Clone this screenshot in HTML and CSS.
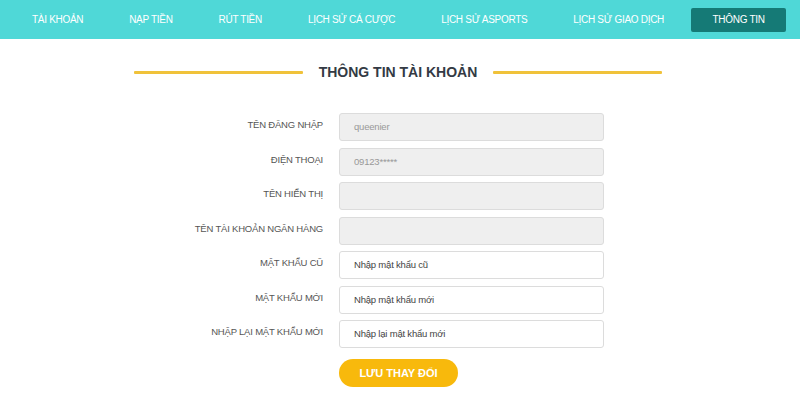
FILE: index.html
```html
<!DOCTYPE html>
<html lang="vi">
<head>
<meta charset="utf-8">
<title>Thông tin tài khoản</title>
<link rel="stylesheet" href="styles.css">
</head>
<body>
<nav class="nav">
  <a class="nav-item">TÀI KHOẢN</a>
  <a class="nav-item">NẠP TIỀN</a>
  <a class="nav-item">RÚT TIỀN</a>
  <a class="nav-item">LỊCH SỬ CÁ CƯỢC</a>
  <a class="nav-item">LỊCH SỬ ASPORTS</a>
  <a class="nav-item">LỊCH SỬ GIAO DỊCH</a>
  <a class="nav-item active">THÔNG TIN</a>
</nav>
<main class="content">
  <div class="heading">
    <span class="line"></span>
    <h1 class="title">THÔNG TIN TÀI KHOẢN</h1>
    <span class="line"></span>
  </div>
  <form class="form">
    <div class="row"><label class="label">TÊN ĐĂNG NHẬP</label><div class="field disabled">queenier</div></div>
    <div class="row"><label class="label">ĐIỆN THOẠI</label><div class="field disabled">09123*****</div></div>
    <div class="row"><label class="label">TÊN HIỂN THỊ</label><div class="field disabled"></div></div>
    <div class="row"><label class="label">TÊN TÀI KHOẢN NGÂN HÀNG</label><div class="field disabled"></div></div>
    <div class="row"><label class="label">MẬT KHẨU CŨ</label><div class="field">Nhập mật khẩu cũ</div></div>
    <div class="row"><label class="label">MẬT KHẨU MỚI</label><div class="field">Nhập mật khẩu mới</div></div>
    <div class="row"><label class="label">NHẬP LẠI MẬT KHẨU MỚI</label><div class="field">Nhập lại mật khẩu mới</div></div>
    <div class="row last"><span class="label"></span><button type="button" class="save">LƯU THAY ĐỔI</button></div>
  </form>
</main>
</body>
</html>
```
FILE: styles.css
```css
* { box-sizing: border-box; }
body {
  margin: 0;
  background: #ffffff;
  font-family: "Liberation Sans", Arial, sans-serif;
  color: #555;
}
.nav {
  display: flex;
  align-items: center;
  height: 39px;
  padding-left: 9px;
  background: #4fd8d7;
}
.nav-item {
  display: block;
  padding: 0 23px;
  line-height: 24px;
  font-size: 10px;
  letter-spacing: -0.3px;
  color: #ffffff;
  white-space: nowrap;
}
.nav-item.active {
  background: #157a76;
  border-radius: 2px;
  padding: 0 21.5px;
  margin-left: 4px;
}
.content {
  width: 528px;
  margin: 0 auto;
  padding-top: 24px;
  position: relative;
  left: -2px;
}
.heading {
  display: flex;
  align-items: center;
  justify-content: center;
}
.line {
  width: 169px;
  height: 3px;
  background: #f0c23a;
  border-radius: 1px;
}
.title {
  margin: 0;
  width: 190px;
  text-align: center;
  font-size: 14px;
  font-weight: bold;
  color: #333a44;
  line-height: 18px;
}
.form {
  margin-top: 32px;
}
.row {
  display: flex;
  align-items: flex-start;
  margin-bottom: 6.5px;
}
.label {
  width: 205px;
  padding-right: 16px;
  padding-top: 6px;
  text-align: right;
  font-size: 9.5px;
  letter-spacing: -0.2px;
  color: #555;
}
.field {
  width: 265px;
  height: 28px;
  border: 1px solid #dcdcdc;
  border-radius: 3px;
  padding-left: 14px;
  line-height: 26px;
  font-size: 9.5px;
  letter-spacing: -0.2px;
  color: #444;
  background: #fff;
}
.field.disabled {
  background: #efefef;
  color: #999;
}
.row.last { margin-top: 10.5px; }
.save {
  width: 119px;
  height: 28px;
  border: none;
  border-radius: 14px;
  background: #f8b90c;
  color: #fff;
  font-family: "Liberation Sans", Arial, sans-serif;
  font-weight: bold;
  font-size: 11px;
  padding: 0;
}
```
